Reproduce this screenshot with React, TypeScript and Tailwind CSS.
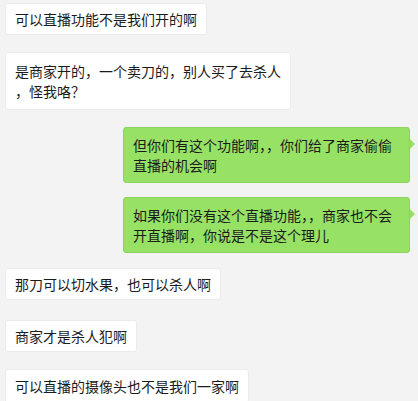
import React from 'react';

type Msg = { side: 'left' | 'right'; lines: string[]; gap: string; py: string };

const messages: Msg[] = [
    { side: 'left', lines: ['可以直播功能不是我们开的啊'], gap: 'mt-0', py: 'py-[5px]' },
    { side: 'left', lines: ['是商家开的，一个卖刀的，别人买了去杀人', '，怪我咯？'], gap: 'mt-[17px]', py: 'py-[8px]' },
    { side: 'right', lines: ['但你们有这个功能啊，，你们给了商家偷偷', '直播的机会啊'], gap: 'mt-[17px]', py: 'py-[7px]' },
    { side: 'right', lines: ['如果你们没有这个直播功能，，商家也不会', '开直播啊，你说是不是这个理儿'], gap: 'mt-[14px]', py: 'py-[7px]' },
    { side: 'left', lines: ['那刀可以切水果，也可以杀人啊'], gap: 'mt-[15px]', py: 'py-[5px]' },
    { side: 'left', lines: ['商家才是杀人犯啊'], gap: 'mt-[20px]', py: 'py-[5px]' },
    { side: 'left', lines: ['可以直播的摄像头也不是我们一家啊'], gap: 'mt-[17px]', py: 'py-[6px]' },
];

function Bubble({ msg }: { msg: Msg }) {
    const mine = msg.side === 'right';
    return (
        <div className={`${msg.gap} ${mine ? 'self-end mr-[3px] w-[287px]' : 'self-start'} relative`}>
            <div
                className={`${msg.py} rounded-[3px] text-[14px] leading-[20px] text-[#1b1b1b] ${
                    mine ? 'px-[9px] bg-[#97e165] border border-[#8cd45d]' : 'px-[9px] bg-white border border-[#ebebeb]'
                }`}
            >
                {msg.lines.map((line, i) => (
                    <div key={i} className="whitespace-nowrap">{line}</div>
                ))}
            </div>
            {mine && (
                <span className="absolute right-[-5px] top-[12px] w-0 h-0 border-y-[5px] border-y-transparent border-l-[5px] border-l-[#97e165]" />
            )}
        </div>
    );
}

export default function App() {
    return (
        <div
            className="w-[418px] h-[401px] overflow-hidden bg-[#f3f3f4] pt-[3px] px-[5px] flex flex-col"
            style={{ fontFamily: '"Noto Sans CJK SC", "Noto Sans", sans-serif' }}
        >
            {messages.map((m, i) => (
                <Bubble key={i} msg={m} />
            ))}
        </div>
    );
}
